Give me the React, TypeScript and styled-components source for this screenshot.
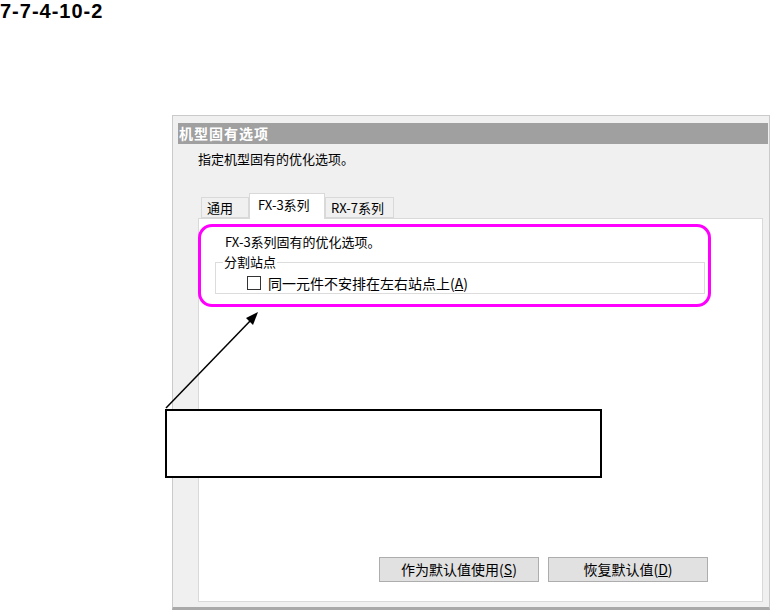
import styled, { createGlobalStyle } from "styled-components";

const GlobalStyle = createGlobalStyle`
  body {
    margin: 0;
    background: #ffffff;
    font-family: "Noto Sans CJK SC", "Noto Sans", sans-serif;
  }
`;

const Page = styled.div`
  position: relative;
  width: 772px;
  height: 611px;
  overflow: hidden;
  background: #ffffff;
`;

const Heading = styled.div`
  font-family: "Liberation Sans", Arial, sans-serif;
  font-weight: bold;
  font-size: 20px;
  line-height: 20px;
  letter-spacing: 1px;
  margin-top: 1px;
  color: #000;
`;

const Dialog = styled.div`
  margin: 94px 0 0 172px;
  width: 596px;
  height: 491px;
  background: #f0f0f0;
  border: 1px solid #cacaca;
  border-bottom: 3px solid #a9a9a9;
  display: flex;
  flex-direction: column;
`;

const TitleBar = styled.div`
  margin: 7px 1px 0 5px;
  height: 21px;
  background: #a0a0a0;
  color: #ffffff;
  font-weight: bold;
  font-size: 14px;
  line-height: 21px;
  letter-spacing: 1px;
  padding-left: 1px;
`;

const Description = styled.div`
  margin: 7px 0 0 25px;
  font-size: 13px;
  line-height: 16px;
  color: #000;
`;

const TabStrip = styled.div`
  display: flex;
  align-items: flex-end;
  margin: 26px 0 0 28px;
  height: 25px;
  position: relative;
  z-index: 1;
`;

const Tab = styled.div<{ $active?: boolean; $width: number }>`
  box-sizing: border-box;
  width: ${(p) => p.$width}px;
  height: ${(p) => (p.$active ? 26 : 21)}px;
  margin-bottom: ${(p) => (p.$active ? -1 : 0)}px;
  background: ${(p) => (p.$active ? "#ffffff" : "#f0f0f0")};
  border: 1px solid #d9d9d9;
  border-bottom: ${(p) => (p.$active ? "none" : "1px solid #d9d9d9")};
  font-size: 13px;
  line-height: ${(p) => (p.$active ? 22 : 20)}px;
  padding-left: ${(p) => (p.$active ? 8 : 5)}px;
  color: #000;
`;

const Panel = styled.div`
  margin: 0 6px 5px 25px;
  flex: 1;
  background: #ffffff;
  border: 1px solid #d9d9d9;
  display: flex;
  flex-direction: column;
`;

const Highlight = styled.div`
  margin: 5px 0 0 -1px;
  width: 507px;
  height: 77px;
  border: 3px solid #ff00ff;
  border-radius: 14px;
  display: flex;
  flex-direction: column;
`;

const PanelText = styled.div`
  margin: 7px 0 0 24px;
  font-size: 13px;
  line-height: 16px;
  color: #000;
`;

const Group = styled.fieldset`
  margin: 4px 3px 0 14px;
  padding: 0 0 0 7px;
  height: 40px;
  box-sizing: border-box;
  border: 1px solid #dcdcdc;
`;

const Legend = styled.legend`
  font-size: 13px;
  line-height: 16px;
  padding: 0 1px;
  color: #000;
`;

const CheckRow = styled.label`
  display: flex;
  align-items: center;
  gap: 7px;
  margin: 4px 0 0 24px;
  font-size: 14px;
  line-height: 18px;
  color: #000;
`;

const CheckBox = styled.span`
  box-sizing: border-box;
  width: 14px;
  height: 14px;
  border: 1px solid #333333;
  background: #ffffff;
`;

const Key = styled.span`
  text-decoration: underline;
`;

const ButtonRow = styled.div`
  margin-top: auto;
  display: flex;
  justify-content: flex-end;
  gap: 9px;
  padding: 0 54px 19px 0;
`;

const Button = styled.div`
  box-sizing: border-box;
  width: 160px;
  height: 25px;
  background: #e1e1e1;
  border: 1px solid #adadad;
  font-size: 14px;
  line-height: 22px;
  text-align: center;
  color: #000;
`;

const Callout = styled.div`
  position: absolute;
  left: 165px;
  top: 409px;
  width: 437px;
  height: 69px;
  box-sizing: border-box;
  background: #ffffff;
  border: 2px solid #000000;
`;

const Arrow = styled.svg`
  position: absolute;
  left: 160px;
  top: 305px;
`;

const App: React.FC = () => {
  return (
    <Page>
      <GlobalStyle />
      <Heading>7-7-4-10-2</Heading>
      <Dialog>
        <TitleBar>机型固有选项</TitleBar>
        <Description>指定机型固有的优化选项。</Description>
        <TabStrip>
          <Tab $width={48}>通用</Tab>
          <Tab $active $width={76}>FX-3系列</Tab>
          <Tab $width={69}>RX-7系列</Tab>
        </TabStrip>
        <Panel>
          <Highlight>
            <PanelText>FX-3系列固有的优化选项。</PanelText>
            <Group>
              <Legend>分割站点</Legend>
              <CheckRow>
                <CheckBox />
                <span>
                  同一元件不安排在左右站点上(<Key>A</Key>)
                </span>
              </CheckRow>
            </Group>
          </Highlight>
          <ButtonRow>
            <Button>
              作为默认值使用(<Key>S</Key>)
            </Button>
            <Button>
              恢复默认值(<Key>D</Key>)
            </Button>
          </ButtonRow>
        </Panel>
      </Dialog>
      <Callout />
      <Arrow width="110" height="110" viewBox="0 0 110 110">
        <line x1="6" y1="103" x2="92" y2="14" stroke="#000" strokeWidth="1.5" />
        <polygon points="98,7 86,13 93,20" fill="#000" />
      </Arrow>
    </Page>
  );
};

export default App;
